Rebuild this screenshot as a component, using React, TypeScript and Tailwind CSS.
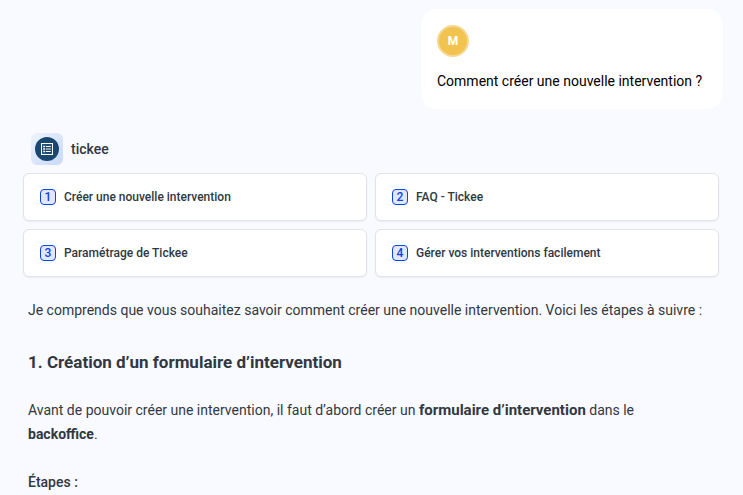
const SOURCES = [
    { id: 1, title: 'Créer une nouvelle intervention' },
    { id: 2, title: 'FAQ - Tickee' },
    { id: 3, title: 'Paramétrage de Tickee' },
    { id: 4, title: 'Gérer vos interventions facilement' },
];

function FormIcon() {
    return (
        <svg viewBox="0 0 12 12" className="h-3 w-3" fill="none" stroke="currentColor">
            <rect x="0.5" y="0.5" width="11" height="11" strokeWidth="1.1" />
            {/* bullets, then rows */}
            <path d="M2.2 3.5h2M2.2 6h2M2.2 8.5h2" strokeWidth="1.4" />
            <path d="M5 3.5h4.8M5 6h4.8M5 8.5h4.8" strokeWidth="1.2" />
        </svg>
    );
}

function UserMessage() {
    return (
        <div className="min-w-[302px] self-end rounded-2xl bg-white p-4">
            <div className="flex h-8 w-8 items-center justify-center rounded-full border-2 border-[#f6d893] bg-[#f2c44f] text-xs font-bold text-white">
                M
            </div>
            <p className="mt-3 text-sm leading-6 text-black">
                Comment créer une nouvelle intervention ?
            </p>
        </div>
    );
}

function SourceCard({ source }: { source: { id: number; title: string } }) {
    return (
        <a
            href={`#source-${source.id}`}
            className="flex h-12 items-center gap-2 rounded-md border border-[#e2e3e7] bg-white px-4 shadow-xs"
        >
            <span className="flex h-4 w-4 items-center justify-center rounded-sm border border-[#0a43e6] bg-[#e0e8fd] text-xs font-medium text-[#0a43e6]">
                {source.id}
            </span>
            <span className="text-xs font-medium">{source.title}</span>
        </a>
    );
}

export default function App() {
    return (
        <div className="min-h-screen bg-[#f9faff] font-['Roboto',sans-serif] text-[#31383f]">
            <main className="flex flex-col px-5 pt-[9px]">
                <UserMessage />

                <div className="mt-6 flex items-center gap-2 px-[11px]">
                    <div className="flex h-8 w-8 items-center justify-center rounded-md bg-linear-to-br from-[#eef3fd] to-[#c7d8f8]">
                        <div className="flex h-6 w-6 items-center justify-center rounded-full bg-[#19476f] text-white">
                            <FormIcon />
                        </div>
                    </div>
                    <span className="text-sm font-medium">tickee</span>
                </div>

                <div className="mt-2 grid grid-cols-2 gap-2 pr-1 pl-[3px]">
                    {SOURCES.map(s => (
                        <SourceCard key={s.id} source={s} />
                    ))}
                </div>

                <article className="pr-3 pl-2 text-sm leading-6">
                    <p className="mt-[21px]">
                        Je comprends que vous souhaitez savoir comment créer une nouvelle
                        intervention. Voici les étapes à suivre :
                    </p>
                    <h3 className="mt-7 text-[17px] leading-6 font-bold">
                        1. Création d’un formulaire d’intervention
                    </h3>
                    <p className="mt-6">
                        Avant de pouvoir créer une intervention, il faut d’abord créer un{' '}
                        <strong className="text-[15px]">formulaire d’intervention</strong> dans le
                        <br />
                        <strong>backoffice</strong>.
                    </p>
                    <h4 className="mt-6 font-medium">Étapes :</h4>
                </article>
            </main>
        </div>
    );
}
